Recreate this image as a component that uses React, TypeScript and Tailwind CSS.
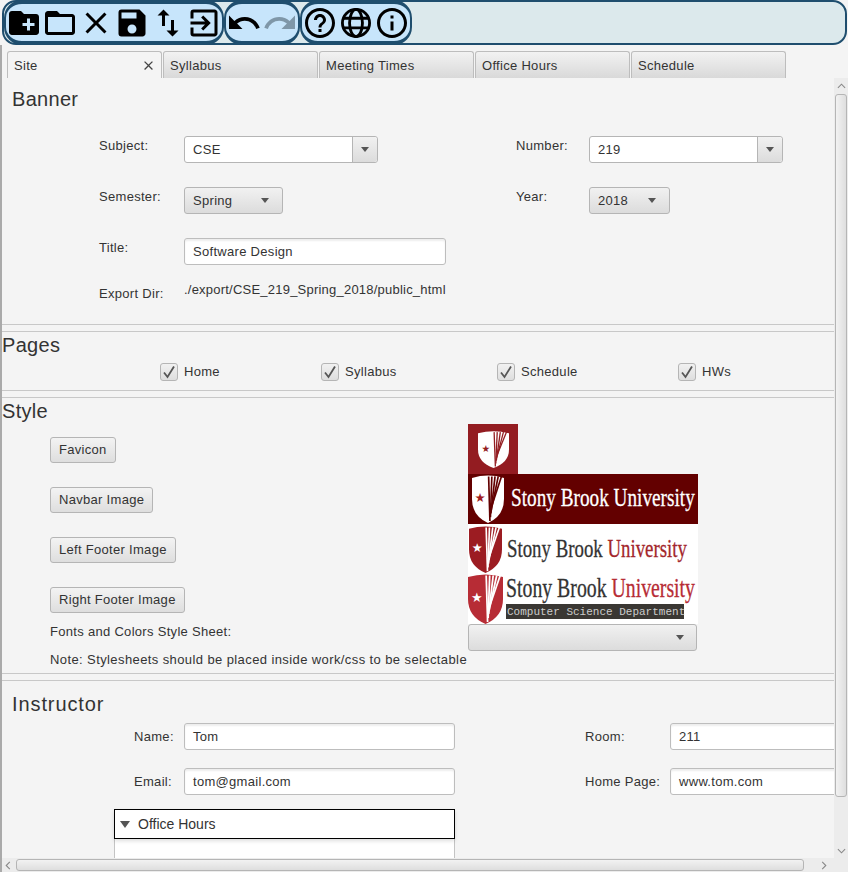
import React from 'react';
import { MdClose, MdCreateNewFolder, MdExitToApp, MdFolderOpen, MdHelpOutline, MdInfoOutline, MdRedo, MdSave, MdSwapVert, MdUndo } from 'react-icons/md';

const FONT = "font-['Liberation_Sans',Arial,sans-serif]";

const GlobeIcon = () => (
  <svg viewBox="0 0 24 24" className="w-[36px] h-[36px]">
    <g fill="none" stroke="#000" strokeWidth="1.900">
      <circle cx="12" cy="12" r="9.050" />
      <ellipse cx="12" cy="12" rx="4.300" ry="9.050" />
      <path d="M3.500 8.800h17M3.500 15.200h17" />
    </g>
  </svg>
);

/* Small form controls */
const Arrow = () => (
  <span className="w-0 h-0 border-l-[4px] border-r-[4px] border-t-[5px] border-l-transparent border-r-transparent border-t-[#555]" />
);

const Label = ({ text, className }: { text: string; className: string }) => (
  <span className={`${className} shrink-0 text-[13px] text-[#333] leading-none`}>{text}</span>
);

const TextField = ({ value, width }: { value: string; width: string }) => (
  <div className={`${width} h-[27px] shrink-0 flex items-center px-[8px] text-[13px] text-[#333] bg-white border border-[#bdbdbd] rounded-[3px] shadow-[inset_0_2px_2px_#eee]`}>
    {value}
  </div>
);

const ComboField = ({ value, width }: { value: string; width: string }) => (
  <div className={`${width} h-[27px] shrink-0 flex text-[13px] text-[#333] bg-white border border-[#b5b5b5] rounded-[3px]`}>
    <span className="flex-1 flex items-center px-[8px]">{value}</span>
    <span className="w-[25px] flex items-center justify-center border-l border-[#b5b5b5] bg-gradient-to-b from-[#f1f1f1] to-[#dcdcdc] rounded-r-[3px]">
      <Arrow />
    </span>
  </div>
);

const Select = ({ value, width }: { value: string; width: string }) => (
  <div className={`${width} h-[27px] shrink-0 flex items-center justify-between pl-[8px] pr-[13px] text-[13px] text-[#333] border border-[#b5b5b5] rounded-[3px] bg-gradient-to-b from-[#f1f1f1] to-[#dcdcdc]`}>
    <span>{value}</span>
    <Arrow />
  </div>
);

const ImageButton = ({ text }: { text: string }) => (
  <div className="h-[26px] w-fit flex items-center px-[8px] text-[13px] text-[#333] border border-[#b5b5b5] rounded-[3px] bg-gradient-to-b from-[#f3f3f3] to-[#dedede]">
    {text}
  </div>
);

const Check = ({ text, width }: { text: string; width: string }) => (
  <div className={`${width} flex items-center gap-[6px]`}>
    <span className="w-[18px] h-[18px] flex items-center justify-center border border-[#b5b5b5] rounded-[3px] bg-gradient-to-b from-[#f1f1f1] to-[#dedede]">
      <svg viewBox="0 0 14 14" className="w-[14px] h-[14px]">
        <path d="M2 7.500l3.500 4.500L12 1.500" fill="none" stroke="#555" strokeWidth="1.800" />
      </svg>
    </span>
    <span className="text-[13px] text-[#333]">{text}</span>
  </div>
);

const Tab = ({ text, active }: { text: string; active?: boolean }) => (
  <div className={`w-[155px] h-[27px] flex items-center justify-between pl-[6px] pr-[5px] pt-[1px] text-[13px] text-[#333] border border-b-0 border-[#bdbdbd] rounded-t-[3px] ${active ? 'bg-[#f4f4f4]' : 'bg-gradient-to-b from-[#f2f2f2] to-[#d9d9d9]'}`}>
    <span>{text}</span>
    {active && <MdClose size={15} color="#444" />}
  </div>
);

const Divider = () => <div className="h-[8px] border-y border-[#c8c8c8] mr-[14px]" />;

/* Logos */
type ShieldProps = { x: number; y: number; w: number; h: number; base: string; stripe: string; star: string };

const Shield = ({ x, y, w, h, base, stripe, star }: ShieldProps) => {
  const mid = x + w * 0.5;
  return (
    <g>
      <path d={`M${x} ${y + h * 0.06}Q${mid} ${y - h * 0.04} ${x + w} ${y + h * 0.06}V${y + h * 0.5}Q${x + w} ${y + h * 0.85} ${mid} ${y + h}Q${x} ${y + h * 0.85} ${x} ${y + h * 0.5}z`} fill={base} />
      {[0.52, 0.62, 0.72, 0.82, 0.92].map((o, i) => (
        <path key={o} d={`M${x + w * o} ${y + h * 0.03}L${x + w * (0.56 + i * 0.015)} ${y + h * (0.96 - i * 0.08)}`} stroke={stripe} strokeWidth={h * 0.035} />
      ))}
      <text x={x + w * 0.25} y={y + h * 0.56} fontSize={h * 0.26} fill={star} textAnchor="middle" fontFamily="DejaVu Sans" letterSpacing="0">★</text>
    </g>
  );
};

const Favicon = () => (
  <svg viewBox="0 0 50 50" className="block w-[50px] h-[50px] bg-[#931c21]">
    <Shield x={10} y={7} w={31} h={37} base="#fff" stripe="#931c21" star="#931c21" />
  </svg>
);

const NavbarLogo = () => (
  <svg viewBox="0 0 230 50" className="block w-[230px] h-[50px] bg-[#630000]">
    <Shield x={4} y={1} w={32} h={48} base="#fff" stripe="#630000" star="#a01c20" />
    <text transform="translate(43 32) scale(0.74 1)" fontSize={26} fill="#fff" stroke="#fff" strokeWidth={0.3} fontFamily="Liberation Serif" letterSpacing="0">Stony Brook University</text>
  </svg>
);

const LeftFooterLogo = () => (
  <svg viewBox="0 0 230 50" className="block w-[230px] h-[50px] bg-white">
    <Shield x={1} y={2} w={33} h={47} base="#9c1c22" stripe="#fff" star="#fff" />
    <text transform="translate(39 33) scale(0.725 1)" fontSize={26} stroke="currentColor" strokeWidth={0.3} fontFamily="Liberation Serif" letterSpacing="0">
      <tspan fill="#333" stroke="#333">Stony Brook </tspan>
      <tspan fill="#a3262b" stroke="#a3262b">University</tspan>
    </text>
  </svg>
);

const RightFooterLogo = () => (
  <svg viewBox="0 0 230 50" className="block w-[230px] h-[50px] bg-white">
    <Shield x={0} y={0} w={35} h={50} base="#b72c35" stripe="#fff" star="#fff" />
    <text transform="translate(38 23) scale(0.733 1)" fontSize={27} strokeWidth={0.3} fontFamily="Liberation Serif" letterSpacing="0">
      <tspan fill="#333" stroke="#333">Stony Brook </tspan>
      <tspan fill="#b72c35" stroke="#b72c35">University</tspan>
    </text>
    <rect x={38} y={30} width={178} height={15} fill="#3a3733" />
    <text x={39} y={41} fontSize={11} fill="#ccc" fontFamily="Liberation Mono" letterSpacing="0">Computer Science Department</text>
  </svg>
);

const capsule = 'h-[45px] flex items-center bg-[#c7e5fb] border-x-2 border-y-[4px] border-[#1f4e6e] rounded-[18px]';

const App: React.FC = () => {
  return (
    <div className={`${FONT} tracking-[0.3px] w-[848px] h-[872px] overflow-hidden flex flex-col bg-[#f4f4f4]`}>
      {/* Toolbar */}
      <div className="h-[45px] shrink-0 flex items-center bg-[#dce9ec] border-2 border-[#1f4e6e] rounded-[14px] ml-[2px] mr-[1px]">
        <div className={capsule}>
          <MdCreateNewFolder size={36} color="#000" />
          <MdFolderOpen size={36} color="#000" />
          <MdClose size={36} color="#000" />
          <MdSave size={36} color="#000" />
          <MdSwapVert size={36} color="#000" />
          <MdExitToApp size={36} color="#000" />
        </div>
        <div className={capsule}>
          <MdUndo size={36} color="#000" />
          <MdRedo size={36} color="#7f97a8" />
        </div>
        <div className={capsule}>
          <MdHelpOutline size={36} color="#000" />
          <GlobeIcon />
          <MdInfoOutline size={36} color="#000" />
        </div>
      </div>

      {/* Tabs */}
      <div className="h-[33px] shrink-0 flex items-end gap-[1px] pl-[5px] bg-[#f4f4f4] border-l-2 border-[#aaa]">
        <Tab text="Site" active />
        <Tab text="Syllabus" />
        <Tab text="Meeting Times" />
        <Tab text="Office Hours" />
        <Tab text="Schedule" />
      </div>

      <div className="flex-1 min-h-0 flex border-l-2 border-[#aaa] overflow-hidden">
        <div className="flex-1 min-w-0 overflow-hidden">
          {/* Banner */}
          <div className="h-[246px] pt-[9px]">
            <h2 className="pl-[10px] text-[20px] leading-[24px] text-[#333]">Banner</h2>
            <div className="mt-[25px] pl-[97px] flex flex-col gap-[24px]">
              <div className="flex h-[27px]">
                <Label text="Subject:" className="w-[85px] pt-[3px]" />
                <ComboField value="CSE" width="w-[194px]" />
                <span className="w-[138px]" />
                <Label text="Number:" className="w-[73px] pt-[3px]" />
                <ComboField value="219" width="w-[194px]" />
              </div>
              <div className="flex h-[27px]">
                <Label text="Semester:" className="w-[85px] pt-[3px]" />
                <Select value="Spring" width="w-[99px]" />
                <span className="w-[233px]" />
                <Label text="Year:" className="w-[73px] pt-[3px]" />
                <Select value="2018" width="w-[81px]" />
              </div>
              <div className="flex h-[27px]">
                <Label text="Title:" className="w-[85px] pt-[3px]" />
                <TextField value="Software Design" width="w-[262px]" />
              </div>
              <div className="flex h-[14px] -mt-[6px]">
                <span className="w-[85px] pt-[4px] text-[13px] leading-none text-[#333]">Export Dir:</span>
                <span className="text-[13px] leading-none tracking-[0.22px] text-[#333]">./export/CSE_219_Spring_2018/public_html</span>
              </div>
            </div>
          </div>
          <Divider />

          {/* Pages */}
          <div className="h-[58px] pt-[1px]">
            <h2 className="text-[20px] leading-[24px] text-[#333]">Pages</h2>
            <div className="flex pl-[158px] mt-[5px]">
              <Check text="Home" width="w-[161px]" />
              <Check text="Syllabus" width="w-[176px]" />
              <Check text="Schedule" width="w-[181px]" />
              <Check text="HWs" width="w-[80px]" />
            </div>
          </div>
          <Divider />

          {/* Style */}
          <div className="h-[275px] pt-[1px] flex">
            <div className="w-[466px] shrink-0">
              <h2 className="text-[20px] leading-[24px] text-[#333]">Style</h2>
              <div className="mt-[14px] pl-[48px] flex flex-col gap-[24px]">
                <ImageButton text="Favicon" />
                <ImageButton text="Navbar Image" />
                <ImageButton text="Left Footer Image" />
                <ImageButton text="Right Footer Image" />
              </div>
              <p className="mt-[11px] pl-[48px] text-[13px] leading-[16px] text-[#333]">Fonts and Colors Style Sheet:</p>
              <p className="mt-[12px] pl-[48px] text-[13px] leading-[16px] tracking-[0.4px] text-[#333] whitespace-nowrap">Note: Stylesheets should be placed inside work/css to be selectable</p>
            </div>
            <div className="pt-[25px]">
              <Favicon />
              <NavbarLogo />
              <LeftFooterLogo />
              <RightFooterLogo />
              <div className="h-[27px] w-[229px] flex items-center justify-end pr-[12px] border border-[#b5b5b5] rounded-[3px] bg-gradient-to-b from-[#f1f1f1] to-[#dcdcdc]">
                <Arrow />
              </div>
            </div>
          </div>
          <Divider />

          {/* Instructor */}
          <div className="pt-[11px]">
            <h2 className="pl-[10px] text-[20px] leading-[24px] tracking-[0.9px] text-[#333]">Instructor</h2>
            <div className="mt-[7px] flex flex-col gap-[18px] pl-[132px] w-[900px]">
              <div className="flex items-center">
                <Label text="Name:" className="w-[50px]" />
                <TextField value="Tom" width="w-[271px]" />
                <span className="w-[130px]" />
                <Label text="Room:" className="w-[85px]" />
                <TextField value="211" width="w-[200px]" />
              </div>
              <div className="flex items-center">
                <Label text="Email:" className="w-[50px]" />
                <TextField value="tom@gmail.com" width="w-[271px]" />
                <span className="w-[130px]" />
                <Label text="Home Page:" className="w-[85px]" />
                <TextField value="www.tom.com" width="w-[200px]" />
              </div>
            </div>
            <div className="ml-[112px] mt-[14px] w-[341px]">
              <div className="relative z-10 h-[30px] flex items-center gap-[8px] pl-[5px] pt-[1px] text-[14px] tracking-normal text-[#333] bg-white border border-black shadow-[0_2px_4px_#0002]">
                <span className="w-0 h-0 border-l-[5px] border-r-[5px] border-t-[7px] border-l-transparent border-r-transparent border-t-[#555]" />
                <span>Office Hours</span>
              </div>
              <div className="h-[40px] bg-white border-x border-[#c4c4c4]" />
            </div>
          </div>
        </div>

        {/* Vertical scrollbar */}
        <div className="w-[14px] shrink-0 -ml-[14px] z-10 flex flex-col items-center bg-[#ececec]">
          <svg viewBox="0 0 10 6" className="w-[9px] h-[6px] mt-[5px] shrink-0">
            <path d="M1 5l4-4 4 4" fill="none" stroke="#888" strokeWidth="1.200" />
          </svg>
          <div className="w-[12px] mt-[5px] h-[703px] shrink-0 border border-[#b5b5b5] rounded-[3px] bg-gradient-to-r from-[#f2f2f2] to-[#dedede]" />
          <svg viewBox="0 0 10 6" className="w-[9px] h-[6px] mt-auto mb-[4px] shrink-0">
            <path d="M1 1l4 4 4-4" fill="none" stroke="#888" strokeWidth="1.200" />
          </svg>
        </div>
      </div>

      {/* Horizontal scrollbar */}
      <div className="h-[14px] shrink-0 flex items-center bg-[#ececec] border-l-2 border-[#aaa]">
        <svg viewBox="0 0 6 10" className="w-[6px] h-[9px] ml-[3px] shrink-0">
          <path d="M5 1L1 5l4 4" fill="none" stroke="#888" strokeWidth="1.200" />
        </svg>
        <div className="w-[788px] h-[12px] ml-[5px] shrink-0 border border-[#b5b5b5] rounded-[3px] bg-gradient-to-b from-[#f2f2f2] to-[#dedede]" />
        <svg viewBox="0 0 6 10" className="w-[6px] h-[9px] ml-[17px] shrink-0">
          <path d="M1 1l4 4-4 4" fill="none" stroke="#888" strokeWidth="1.200" />
        </svg>
      </div>
    </div>
  );
};

export default App;
